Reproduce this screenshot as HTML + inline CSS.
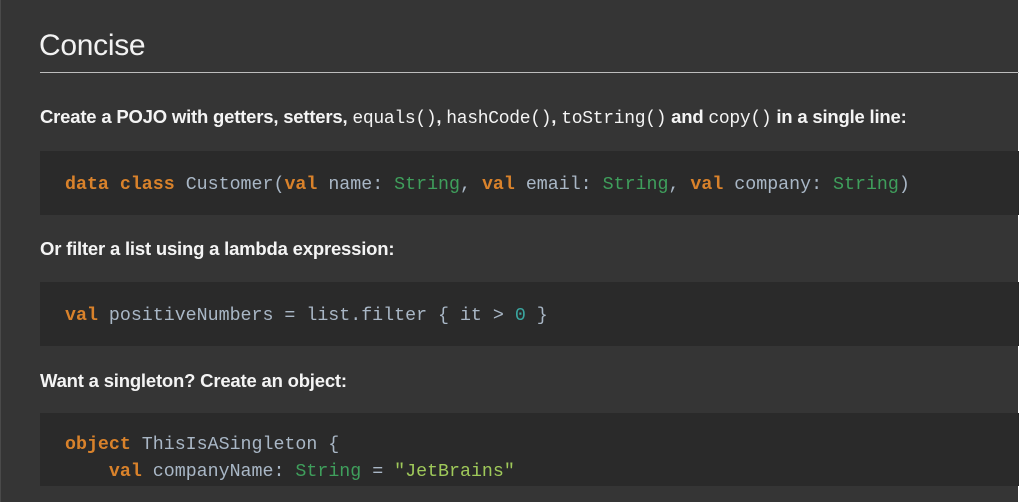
<!DOCTYPE html>
<html><head><meta charset="utf-8"><style>
html,body{margin:0;padding:0;width:1024px;height:502px;overflow:hidden;background:#fff}
.page{position:absolute;left:0;top:0;width:1018px;height:502px;background:#353535;border-left:1px solid #4a4a4a;box-sizing:border-box}
h1{position:absolute;left:38px;top:29px;margin:0;font:30px "Liberation Sans",sans-serif;color:#f2f2f2;letter-spacing:-0.3px}
.rule{position:absolute;left:39px;top:72px;width:979px;height:1px;background:#bdbdbd}
p{position:absolute;left:39px;margin:0;font:bold 18.5px "Liberation Sans",sans-serif;color:#f4f4f4;letter-spacing:-0.2px;white-space:nowrap}
p code{font:18px "Liberation Mono",monospace;letter-spacing:-0.3px}
.blk{position:absolute;left:39px;width:979px;background:#2a2a2a}
pre{position:absolute;left:25px;margin:0;font:18.3px/27px "Liberation Mono",monospace;color:#a9b7c6;white-space:pre}
.k{color:#d9822b;font-weight:bold}
.t{color:#3f9f5c}
.n{color:#3aa6a0}
.s{color:#9fc95a}
</style></head><body><div class="page">
<h1>Concise</h1>
<div class="rule"></div>
<p style="top:106px">Create a POJO with getters, setters, <code>equals()</code>, <code>hashCode()</code>, <code>toString()</code> and <code>copy()</code> in a single line:</p>
<div class="blk" style="top:151px;height:64px"><pre style="top:21px"><span class="k">data class</span> Customer(<span class="k">val</span> name: <span class="t">String</span>, <span class="k">val</span> email: <span class="t">String</span>, <span class="k">val</span> company: <span class="t">String</span>)</pre></div>
<p style="top:238px">Or filter a list using a lambda expression:</p>
<div class="blk" style="top:282px;height:64px"><pre style="top:21px"><span class="k">val</span> positiveNumbers = list.filter { it &gt; <span class="n">0</span> }</pre></div>
<p style="top:370px">Want a singleton? Create an object:</p>
<div class="blk" style="top:413px;height:73px"><pre style="top:19px"><span class="k">object</span> ThisIsASingleton {
    <span class="k">val</span> companyName: <span class="t">String</span> = <span class="s">"JetBrains"</span></pre></div>
</div></body></html>
